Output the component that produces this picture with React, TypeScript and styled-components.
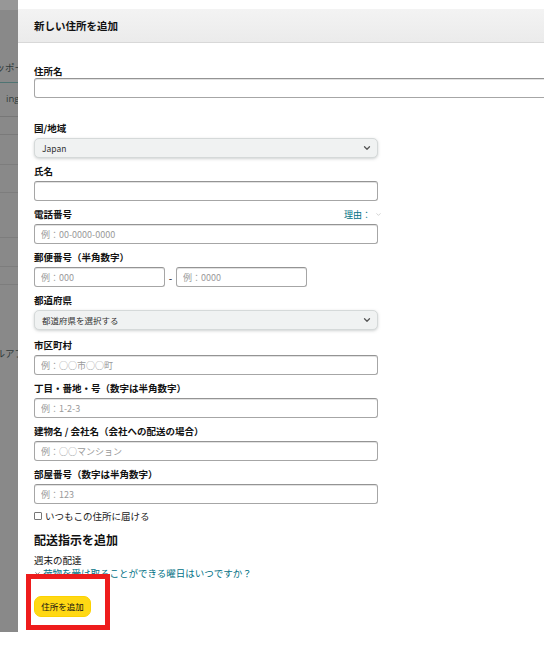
import React from 'react';
import styled, { createGlobalStyle } from 'styled-components';
import { ChevronDown } from 'lucide-react';

const GlobalStyle = createGlobalStyle`
  html, body {
    margin: 0;
    padding: 0;
    background: #fff;
  }
  body {
    font-family: "Noto Sans CJK JP", "Noto Sans", "Liberation Sans", sans-serif;
    color: #0f1111;
  }
  * { box-sizing: border-box; }
`;

// the page behind the modal, dimmed by the overlay
const sidebarItems = [
  { text: '', h: 10, pb: 0, light: true },
  { text: 'ッポー', h: 73, pb: 8, line: '#4f7473' },
  { text: 'ings', h: 34, pb: 11, line: '#777' },
  { text: '', h: 18, pb: 0, line: '#7a7a7a' },
  { text: '', h: 30, pb: 0, line: '#7d7d7d' },
  { text: '', h: 28, pb: 0, line: '#7d7d7d' },
  { text: '', h: 45, pb: 0, line: '#7d7d7d' },
  { text: '', h: 29, pb: 0, line: '#7d7d7d' },
  { text: '', h: 18, pb: 0, line: '#7d7d7d' },
  { text: 'ルアプ', h: 85, pb: 9, line: 'transparent' },
];

type Field = {
  label: string;
  placeholder?: string;
  kind: 'input' | 'select' | 'postal';
  value?: string;
  note?: boolean;
  extra?: number;
};

const fields: Field[] = [
  { label: '国/地域', kind: 'select', value: 'Japan' },
  { label: '氏名', kind: 'input' },
  { label: '電話番号', kind: 'input', placeholder: '例：00-0000-0000', note: true },
  { label: '郵便番号（半角数字）', kind: 'postal' },
  { label: '都道府県', kind: 'select', value: '都道府県を選択する', extra: 2 },
  { label: '市区町村', kind: 'input', placeholder: '例：○○市○○町' },
  { label: '丁目・番地・号（数字は半角数字）', kind: 'input', placeholder: '例：1-2-3' },
  { label: '建物名 / 会社名（会社への配送の場合）', kind: 'input', placeholder: '例：○○マンション' },
  { label: '部屋番号（数字は半角数字）', kind: 'input', placeholder: '例：123' },
];

export default function App() {
  return (
    <Page>
      <GlobalStyle />
      <Sidebar>
        {sidebarItems.map((item, i) => (
          <SideItem key={i} $h={item.h} $pb={item.pb} $line={item.line} $light={item.light}>
            {item.text && <SideText>{item.text}</SideText>}
          </SideItem>
        ))}
      </Sidebar>
      <Modal>
        <Header>新しい住所を追加</Header>
        <Body>
          <FirstGroup>
            <Label>住所名</Label>
            <WideInput />
          </FirstGroup>
          {fields.map((f) => (
            <Group key={f.label} $extra={f.extra || 0}>
              <LabelRow>
                <Label>{f.label}</Label>
                {f.note && (
                  <Reason>
                    理由：<ChevronDown size={7} color="#b5b5b5" strokeWidth={2} />
                  </Reason>
                )}
              </LabelRow>
              {f.kind === 'select' && (
                <Select>
                  <span>{f.value}</span>
                  <ChevronDown size={10} strokeWidth={3} color="#555" />
                </Select>
              )}
              {f.kind === 'input' && <Input placeholder={f.placeholder} />}
              {f.kind === 'postal' && (
                <PostalRow>
                  <PostalInput placeholder="例：000" />
                  <Dash>-</Dash>
                  <PostalInput placeholder="例：0000" />
                </PostalRow>
              )}
            </Group>
          ))}
          <CheckRow>
            <Box />
            いつもこの住所に届ける
          </CheckRow>
          <Heading>配送指示を追加</Heading>
          <SubLabel>週末の配達</SubLabel>
          <Link>
            <ChevronDown size={7} strokeWidth={2.5} color="#555" />
            荷物を受け取ることができる曜日はいつですか？
          </Link>
          <ButtonArea>
            <Highlight />
            <AddButton>住所を追加</AddButton>
          </ButtonArea>
        </Body>
      </Modal>
    </Page>
  );
}

const Page = styled.div`
  display: flex;
  width: 544px;
  height: 659px;
  overflow: hidden;
  background: #fff;
`;

const Sidebar = styled.div`
  width: 18px;
  height: 632px;
  flex-shrink: 0;
  background: #898989;
  display: flex;
  flex-direction: column;
  overflow: hidden;
`;

const SideItem = styled.div<{ $h: number; $pb: number; $line?: string; $light?: boolean }>`
  height: ${(p) => p.$h}px;
  flex-shrink: 0;
  background: ${(p) => (p.$light ? '#979797' : 'transparent')};
  border-bottom: 1px solid ${(p) => p.$line || 'transparent'};
  display: flex;
  align-items: flex-end;
  justify-content: flex-end;
  overflow: hidden;
  padding-bottom: ${(p) => p.$pb}px;
`;

const SideText = styled.span`
  font-size: 9.5px;
  line-height: 13px;
  color: #2e3a3a;
  white-space: nowrap;
  margin-right: -6px;
  font-family: "Open Sans", "Noto Sans CJK JP", sans-serif;
`;

const Modal = styled.div`
  flex: 1;
  min-width: 620px;
  padding-top: 9px;
  background: #fff;
`;

const Header = styled.div`
  height: 34px;
  display: flex;
  align-items: center;
  padding-left: 16px;
  font-size: 10.5px;
  font-weight: 700;
  color: #111;
  background: linear-gradient(#f3f3f3, #ebebeb);
  border-bottom: 1px solid #d8d8d8;
`;

const Body = styled.div`
  padding: 21px 0 0 16px;
  display: flex;
  flex-direction: column;
`;

const FirstGroup = styled.div`
  display: flex;
  flex-direction: column;
  margin-bottom: 23px;
`;

const Group = styled.div<{ $extra: number }>`
  display: flex;
  flex-direction: column;
  width: 344px;
  margin-bottom: ${(p) => 6 + p.$extra}px;
`;

const LabelRow = styled.div`
  display: flex;
  justify-content: space-between;
  align-items: center;
  margin-bottom: 3px;
`;

const Label = styled.div`
  font-size: 9.5px;
  line-height: 14px;
  font-weight: 700;
  color: #111;
`;

const Reason = styled.span`
  font-size: 9px;
  color: #007185;
  display: flex;
  align-items: center;
  gap: 4px;
  margin-right: -4px;
`;

const Input = styled.input`
  height: 20px;
  width: 100%;
  border: 1px solid #a6a6a6;
  border-top-color: #949494;
  border-radius: 3px;
  box-shadow: inset 0 1px 0 rgba(15, 17, 17, 0.12);
  padding: 0 6px;
  font-family: inherit;
  font-size: 9px;
  outline: none;
  &::placeholder {
    color: #9a9a9a;
  }
`;

const WideInput = styled(Input)`
  width: 600px;
`;

const Select = styled.div`
  height: 20px;
  display: flex;
  align-items: center;
  justify-content: space-between;
  padding: 0 5px 0 7px;
  font-size: 8.5px;
  color: #333;
  background: #f0f2f2;
  border: 1px solid #d5d9d9;
  border-radius: 5px;
  box-shadow: 0 1px 3px rgba(160, 165, 165, 0.5);
`;

const PostalRow = styled.div`
  display: flex;
  align-items: center;
  gap: 3px;
`;

const PostalInput = styled(Input)`
  width: 131px;
`;

const Dash = styled.span`
  width: 5px;
  font-size: 10px;
  text-align: center;
`;

const CheckRow = styled.label`
  display: flex;
  align-items: center;
  gap: 3px;
  margin-top: -1px;
  font-size: 9.5px;
  color: #222;
`;

const Box = styled.span`
  width: 8px;
  height: 8px;
  border: 1px solid #777;
  border-radius: 1px;
`;

const Heading = styled.div`
  margin-top: 8px;
  font-size: 12px;
  line-height: 17px;
  font-weight: 700;
  color: #111;
`;

const SubLabel = styled.div`
  margin-top: 5px;
  font-size: 9.5px;
  color: #111;
`;

const Link = styled.div`
  display: flex;
  align-items: center;
  gap: 2px;
  font-size: 9.5px;
  color: #007185;
  margin-top: -1px;
`;

const ButtonArea = styled.div`
  position: relative;
  margin-top: 11px;
`;

const Highlight = styled.div`
  position: absolute;
  left: -8px;
  top: -17px;
  width: 84px;
  height: 56px;
  border: 5px solid #ee1c1c;
`;

const AddButton = styled.button`
  width: 57px;
  height: 21px;
  background: #ffd814;
  border: 1px solid #fcd200;
  border-radius: 7px;
  font-family: inherit;
  font-size: 8.5px;
  color: #111;
  padding: 0;
`;
